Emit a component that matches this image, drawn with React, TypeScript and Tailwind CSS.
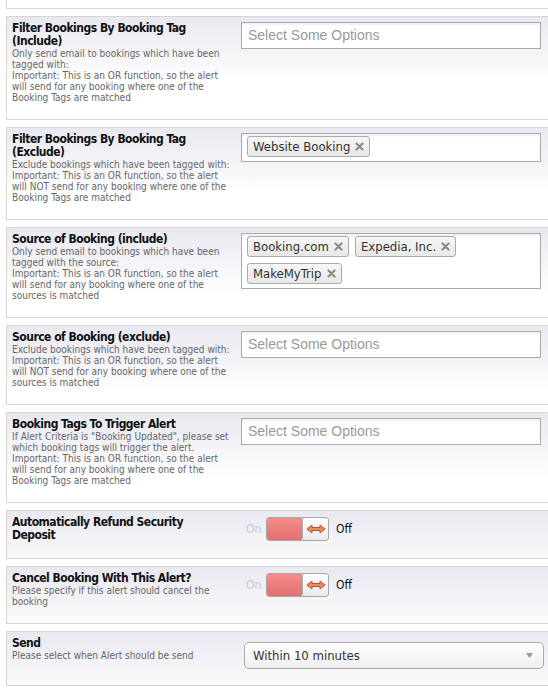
import React from 'react'

const tahoma = { fontFamily: '"DejaVu Sans Condensed", "Liberation Sans", sans-serif' }

type RowProps = {
  title: React.ReactNode
  desc?: React.ReactNode
  children?: React.ReactNode
}

function Row({ title, desc, children }: RowProps) {
  return (
    <div className="ml-[6px] mb-[7px] flex w-[570px] border-y border-l border-[#d6d6d6] bg-[linear-gradient(to_bottom,#e8e8f0_0px,#ffffff_66px)] pb-[16px] pl-[5px] pt-[5px]">
      <div className="w-[222px] shrink-0" style={tahoma}>
        <div className="text-[12px] font-bold leading-[13px] tracking-[-0.5px] text-[#111]">{title}</div>
        {desc && <div className="text-[10px] leading-[11px] text-[#666666]">{desc}</div>}
      </div>
      <div className="ml-[7px] flex-1">{children}</div>
    </div>
  )
}

function Placeholder() {
  return (
    <div className="flex h-[27px] w-[300px] items-center border border-[#aaaaaa] bg-white pl-[6px] shadow-[inset_0_2px_2px_rgba(0,0,0,0.06)]">
      <span className="text-[14px] text-[#999999]" style={{ fontFamily: '"Liberation Sans", Arial, sans-serif' }}>
        Select Some Options
      </span>
    </div>
  )
}

function Cross() {
  return (
    <svg width="9" height="9" viewBox="0 0 9 9" className="ml-[5px]">
      <path d="M1.5 1.5 L7.5 7.5 M7.5 1.5 L1.5 7.5" stroke="#8a8a8a" strokeWidth="2.2" strokeLinecap="round" />
    </svg>
  )
}

function Tag({ label }: { label: string }) {
  return (
    <div
      className="flex h-[21px] items-center rounded-[3px] border border-[#aaaaaa] bg-[linear-gradient(to_bottom,#f6f6f6,#e8e8e8)] pl-[5px] pr-[5px] text-[13px] text-[#333]"
      style={tahoma}
    >
      {label}
      <Cross />
    </div>
  )
}

function TagBox({ tags }: { tags: string[] }) {
  return (
    <div className="flex w-[300px] flex-wrap gap-[6px] border border-[#aaaaaa] bg-white pb-[4px] pl-[5px] pt-[2px] shadow-[inset_0_2px_2px_rgba(0,0,0,0.06)]">
      {tags.map((t) => (
        <Tag key={t} label={t} />
      ))}
    </div>
  )
}

function Toggle() {
  return (
    <div className="mt-[1px] flex items-center" style={tahoma}>
      <span className="w-[25px] pl-[5px] text-[12px] text-[#cccccc]">On</span>
      <div className="flex h-[24px] w-[63px] overflow-hidden rounded-[3px] border border-[#a9a9a9]">
        <div className="w-[35px] bg-[linear-gradient(to_bottom,#f68a8a,#e27070)]" />
        <div className="flex flex-1 items-center justify-center rounded-[3px] border-l border-[#b0b0b0] bg-[linear-gradient(to_bottom,#ffffff,#e9e9e9)]">
          <svg width="20" height="10" viewBox="0 0 20 10">
            <path
              d="M1 5 L6 1 L6 3.5 L14 3.5 L14 1 L19 5 L14 9 L14 6.5 L6 6.5 L6 9 Z"
              fill="#ec8a5e"
              stroke="#b4532f"
              strokeWidth="1"
              strokeLinejoin="round"
            />
          </svg>
        </div>
      </div>
      <span className="ml-[7px] text-[12px] text-[#111]">Off</span>
    </div>
  )
}

function SelectBox() {
  return (
    <div
      className="ml-[3px] mt-[5px] flex h-[27px] w-[300px] items-center justify-between rounded-[5px] border border-[#aaaaaa] bg-[linear-gradient(to_bottom,#ffffff,#eeeeee)] pl-[8px] pr-[10px] text-[13px] text-[#333]"
      style={tahoma}
    >
      <span>Within 10 minutes</span>
      <svg width="7" height="5" viewBox="0 0 7 5">
        <path d="M0 0 L7 0 L3.5 5 Z" fill="#999999" />
      </svg>
    </div>
  )
}

export default function App() {
  return (
    <div className="h-[693px] w-[548px] overflow-hidden bg-white">
      <div className="mb-[7px] ml-[6px] h-[9px] w-[570px] border-b border-l border-[#d6d6d6] bg-white" />

      <Row
        title={
          <>
            Filter Bookings By Booking Tag
            <br />
            (Include)
          </>
        }
        desc={
          <>
            Only send email to bookings which have been tagged with:
            <br />
            Important: This is an OR function, so the alert will send for any booking where one of the Booking Tags are
            matched
          </>
        }
      >
        <Placeholder />
      </Row>

      <Row
        title={
          <>
            Filter Bookings By Booking Tag
            <br />
            (Exclude)
          </>
        }
        desc={
          <>
            Exclude bookings which have been tagged with:
            <br />
            Important: This is an OR function, so the alert will NOT send for any booking where one of the Booking Tags
            are matched
          </>
        }
      >
        <TagBox tags={['Website Booking']} />
      </Row>

      <Row
        title="Source of Booking (include)"
        desc={
          <>
            Only send email to bookings which have been tagged with the source:
            <br />
            Important: This is an OR function, so the alert will send for any booking where one of the sources is
            matched
          </>
        }
      >
        <TagBox tags={['Booking.com', 'Expedia, Inc.', 'MakeMyTrip']} />
      </Row>

      <Row
        title="Source of Booking (exclude)"
        desc={
          <>
            Exclude bookings which have been tagged with:
            <br />
            Important: This is an OR function, so the alert will NOT send for any booking where one of the sources is
            matched
          </>
        }
      >
        <Placeholder />
      </Row>

      <Row
        title="Booking Tags To Trigger Alert"
        desc={
          <>
            If Alert Criteria is "Booking Updated", please set which booking tags will trigger the alert.
            <br />
            Important: This is an OR function, so the alert will send for any booking where one of the Booking Tags are
            matched
          </>
        }
      >
        <Placeholder />
      </Row>

      <Row
        title={
          <>
            Automatically Refund Security
            <br />
            Deposit
          </>
        }
      >
        <Toggle />
      </Row>

      <Row title="Cancel Booking With This Alert?" desc="Please specify if this alert should cancel the booking">
        <Toggle />
      </Row>

      <Row title="Send" desc="Please select when Alert should be send">
        <SelectBox />
      </Row>
    </div>
  )
}
